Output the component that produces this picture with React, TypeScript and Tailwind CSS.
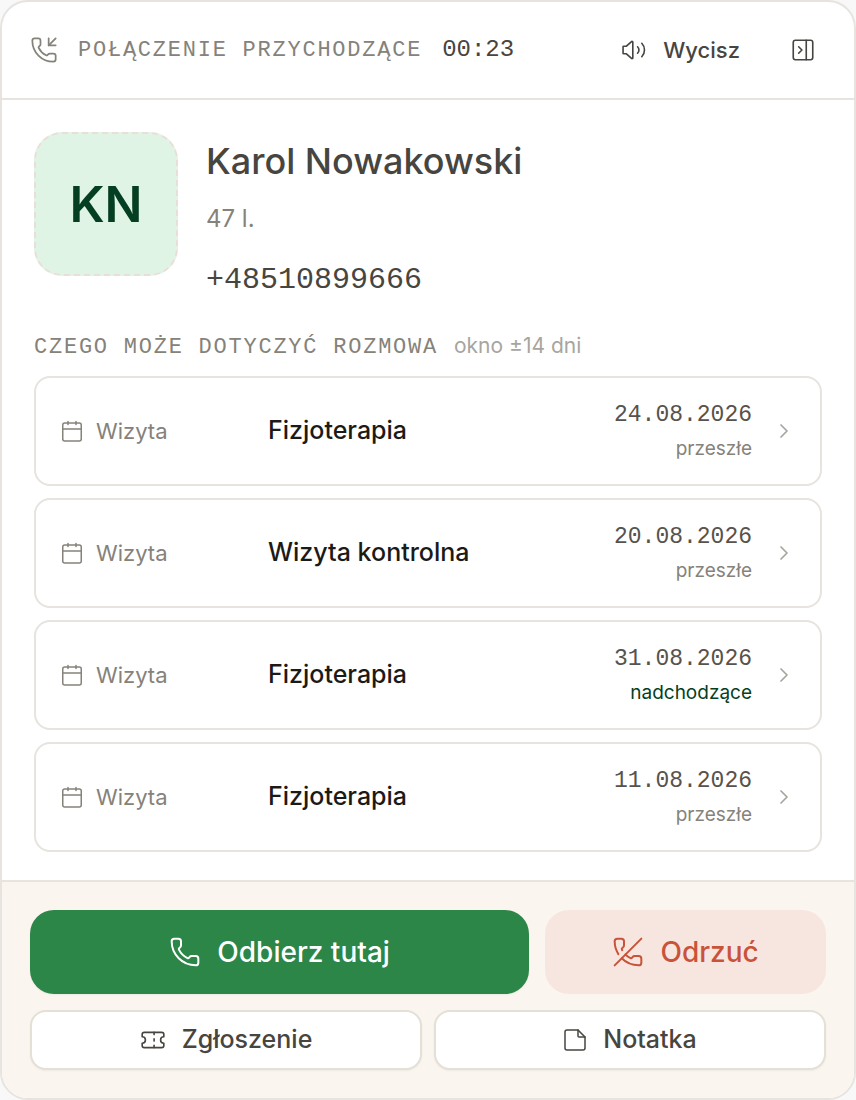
import type { ReactNode } from "react";
import { ChevronRight, PanelRightClose, Phone, PhoneIncoming, PhoneOff, Ticket } from "lucide-react";
import clsx from "clsx";

type Visit = {
  title: string;
  date: string;
  upcoming?: boolean;
};

const visits: Visit[] = [
  { title: "Fizjoterapia", date: "24.08.2026" },
  { title: "Wizyta kontrolna", date: "20.08.2026" },
  { title: "Fizjoterapia", date: "31.08.2026", upcoming: true },
  { title: "Fizjoterapia", date: "11.08.2026" },
];

const mono = "font-['Liberation_Mono',monospace]";

function VolumeIcon() {
  return (
    <svg viewBox="0 0 24 24" className="size-[26px]" fill="none" stroke="currentColor" strokeWidth="1.5" strokeLinecap="round" strokeLinejoin="round" aria-hidden="true">
      <path d="M2.5 8.5a.6.6 0 0 0-.6.6v5.8a.6.6 0 0 0 .6.6H5l4.7 4.3a.7.7 0 0 0 1.2-.5V4.7a.7.7 0 0 0-1.2-.5L5 8.5Z" />
      <path d="M15.3 9a4.2 4.2 0 0 1 0 6" />
      <path d="M19.2 5.8a9 9 0 0 1 0 12.4" />
    </svg>
  );
}

function CalendarIcon() {
  return (
    <svg viewBox="0 0 24 24" className="size-6" fill="none" stroke="currentColor" strokeWidth="1.5" strokeLinecap="round" strokeLinejoin="round" aria-hidden="true">
      <rect x="2.75" y="4" width="18.5" height="18" rx="2" />
      <path d="M3 10h18M8 2.500v3M16 2.500v3" />
    </svg>
  );
}

function NoteIcon() {
  return (
    <svg viewBox="0 0 24 24" className="size-6" fill="none" stroke="currentColor" strokeWidth="1.5" strokeLinecap="round" strokeLinejoin="round" aria-hidden="true">
      <path d="M15 2H4a2 2 0 0 0-2 2v16a2 2 0 0 0 2 2h16a2 2 0 0 0 2-2V9Z" />
      <path d="M15 2v6a1 1 0 0 0 1 1h6" />
    </svg>
  );
}

function VisitRow({ visit }: { visit: Visit }) {
  return (
    <li>
      <button
        type="button"
        className="flex h-[110px] w-full items-center rounded-2xl border-2 border-[#e7e3de] bg-white px-6 text-left"
      >
        <span className="flex w-[208px] items-center gap-3 text-[22px] text-[#85827a]">
          <CalendarIcon />
          Wizyta
        </span>
        <span className="flex-1 text-[25px] font-medium text-[#1c1a17]">{visit.title}</span>
        <span className="flex flex-col items-end">
          <span className={clsx(mono, "text-[23px] leading-9 text-[#57534c]")}>{visit.date}</span>
          <span className={clsx("text-[19px] leading-8", visit.upcoming ? "text-[#043f22]" : "text-[#85827a]")}>
            {visit.upcoming ? "nadchodzące" : "przeszłe"}
          </span>
        </span>
        <ChevronRight className="ml-5 size-6 text-[#a8a59e]" strokeWidth={1.75} />
      </button>
    </li>
  );
}

function SecondaryButton({ icon, children }: { icon: ReactNode; children: ReactNode }) {
  return (
    <button
      type="button"
      className="flex h-[60px] items-center justify-center gap-4 rounded-2xl border-2 border-[#e3e0d6] bg-white text-[25px] font-medium text-[#47453f] shadow-xs"
    >
      {icon}
      {children}
    </button>
  );
}

export default function App() {
  return (
    <main className="bg-[#f8f8f8] font-['Inter',sans-serif]">
      <section className="overflow-hidden rounded-[28px] border-2 border-[#e7e3de] bg-white">
        {/* Call status */}
        <header className="flex h-[98px] items-center border-b-2 border-[#e7e3de] pr-[38px] pl-7 text-[#47453f]">
          <PhoneIncoming className="size-7 text-[#85827a]" strokeWidth={1.5} />
          <p className={clsx(mono, "ml-5 text-[22px] tracking-[0.08em] text-[#85827a] uppercase")}>
            Połączenie przychodzące
          </p>
          <time className={clsx(mono, "ml-5 text-2xl")}>00:23</time>
          <button type="button" className="ml-auto flex items-center gap-4 text-[22px] font-medium">
            <VolumeIcon />
            Wycisz
          </button>
          <button type="button" aria-label="Zwiń panel" className="ml-[50px]">
            <PanelRightClose className="size-[26px]" strokeWidth={1.5} />
          </button>
        </header>

        {/* Caller */}
        <div className="px-8 pt-8 pb-7">
          <div className="flex gap-7">
            <div className="flex size-36 items-center justify-center rounded-[28px] border-2 border-dashed border-[#eaded9] bg-[#e0f4e5] text-[50px] font-semibold text-[#043f22]">
              KN
            </div>
            <div className="text-[#47453f]">
              <h1 className="text-4xl leading-[58px] font-medium">Karol Nowakowski</h1>
              <p className="text-2xl leading-[58px] text-[#85827a]">47 l.</p>
              <p className={clsx(mono, "text-[30px] leading-[64px]")}>+48510899666</p>
            </div>
          </div>

          {/* Related visits */}
          <div className="mt-4 flex items-baseline gap-4 leading-9">
            <h2 className={clsx(mono, "text-[22px] tracking-[0.08em] text-[#85827a] uppercase")}>
              Czego może dotyczyć rozmowa
            </h2>
            <span className="text-[21px] text-[#a8a59e]">okno ±14 dni</span>
          </div>
          <ul className="mt-2.5 flex flex-col gap-3">
            {visits.map((visit) => (
              <VisitRow key={visit.date} visit={visit} />
            ))}
          </ul>
        </div>

        {/* Actions */}
        <footer className="border-t-2 border-[#e7e3de] bg-[#faf5ee] p-7">
          <div className="grid grid-cols-[16fr_9fr] gap-4">
            <button
              type="button"
              className="flex h-[84px] items-center justify-center gap-4 rounded-3xl bg-[#2b8648] text-[28px] font-medium text-white shadow-xs"
            >
              <Phone className="size-8" strokeWidth={1.5} />
              Odbierz tutaj
            </button>
            <button
              type="button"
              className="flex h-[84px] items-center justify-center gap-4 rounded-3xl bg-[#f7e6e0] text-[28px] font-medium text-[#c9533a]"
            >
              <PhoneOff className="size-8" strokeWidth={1.5} />
              Odrzuć
            </button>
          </div>
          <div className="mt-4 grid grid-cols-2 gap-3">
            <SecondaryButton icon={<Ticket className="size-[26px]" strokeWidth={1.5} />}>Zgłoszenie</SecondaryButton>
            <SecondaryButton icon={<NoteIcon />}>Notatka</SecondaryButton>
          </div>
        </footer>
      </section>
    </main>
  );
}
